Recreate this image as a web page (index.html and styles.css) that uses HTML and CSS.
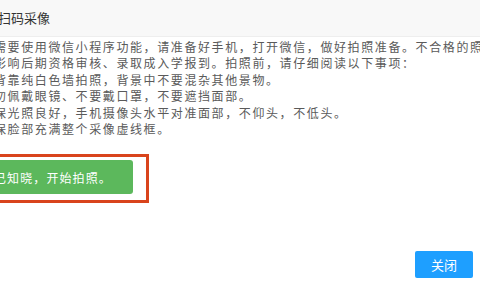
FILE: index.html
```html
<!DOCTYPE html>
<html lang="zh-CN">
<head>
<meta charset="utf-8">
<title>扫码采像</title>
<link rel="stylesheet" href="styles.css">
</head>
<body>
<div class="dialog">
  <div class="title">扫码采像</div>
  <div class="content">
    <div class="line">需要使用微信小程序功能，请准备好手机，打开微信，做好拍照准备。不合格的照片</div>
    <div class="line">影响后期资格审核、录取成入学报到。拍照前，请仔细阅读以下事项：</div>
    <div class="line">背靠纯白色墙拍照，背景中不要混杂其他景物。</div>
    <div class="line">勿佩戴眼镜、不要戴口罩，不要遮挡面部。</div>
    <div class="line">保光照良好，手机摄像头水平对准面部，不仰头，不低头。</div>
    <div class="line">保脸部充满整个采像虚线框。</div>
    <div class="mark">
      <button class="btn-ok" type="button">已知晓，开始拍照。</button>
    </div>
  </div>
  <div class="footer">
    <button class="btn-close" type="button">关闭</button>
  </div>
</div>
</body>
</html>
```

FILE: styles.css
```css
html, body {
  margin: 0;
  padding: 0;
  overflow: hidden;
  background: #fff;
  font-family: "Noto Sans CJK SC", "Noto Sans", sans-serif;
}

.dialog {
  margin-left: -6px;
}

.title {
  height: 36px;
  line-height: 36px;
  padding-left: 4px;
  background: #f8f8f8;
  border-bottom: 1px solid #eee;
  font-size: 13px;
  color: #333;
}

.content {
  padding-top: 2px;
  white-space: nowrap;
}

.line {
  font-size: 12px;
  letter-spacing: 1.6px;
  line-height: 16.4px;
  color: #5a5a5a;
}

.mark {
  display: inline-block;
  margin-top: 17px;
  margin-left: -30px;
  border: 3px solid #d9441c;
  padding: 3px 13px 6px 7px;
}

.btn-ok {
  display: block;
  height: 34px;
  padding: 0 21px 0 20px;
  border: none;
  border-radius: 3px;
  background: #5cb85c;
  color: #fff;
  font-family: inherit;
  font-size: 12px;
  letter-spacing: 1.1px;
}

.footer {
  display: flex;
  justify-content: flex-end;
  margin-top: 48px;
  padding-right: 7px;
}

.btn-close {
  height: 27px;
  padding: 0 16px;
  border: none;
  border-radius: 2px;
  background: #1e9fff;
  color: #fff;
  font-family: inherit;
  font-size: 13px;
}
```
